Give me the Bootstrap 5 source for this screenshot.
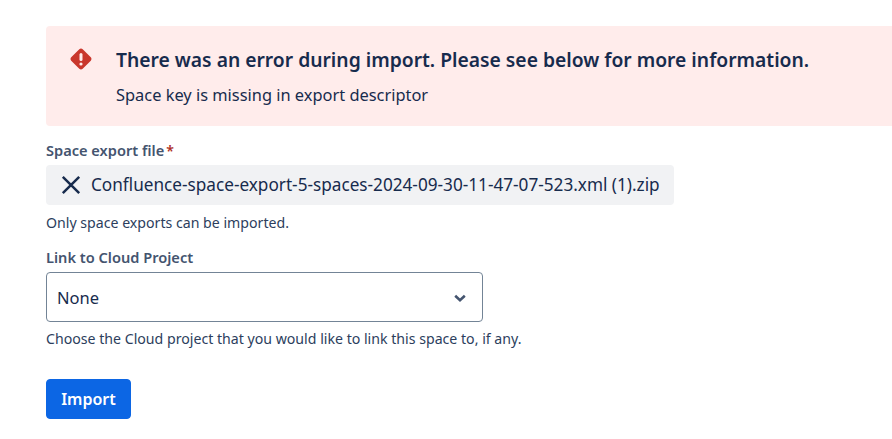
<!DOCTYPE html>
<html><head><meta charset="utf-8">
<link href="https://cdn.jsdelivr.net/npm/bootstrap@5.3.0/dist/css/bootstrap.min.css" rel="stylesheet">
<style>
html,body{height:439px;overflow:hidden}
body{background:#fff;font-family:"Noto Sans","Open Sans",sans-serif;color:#172b4d;font-size:14px;line-height:20px}
.page-wrap{padding:26px 0 0 46px}
.err-box{background:#ffeceb;height:100px;border-radius:4px 0 0 4px;padding:20px 24px 0 24px;gap:24px;color:#172b4d}
.err-ico{width:22px;height:22px;margin-top:2px;flex:none}
.err-title{font-size:19.3px;font-weight:600;line-height:28px;margin:0 0 9px;color:#172b4d;white-space:nowrap}
.err-msg{font-size:16.4px;line-height:24px;color:#172b4d}
.fld-label{font-size:14.6px;font-weight:600;line-height:20px;color:#44546f;margin:0}
.req{color:#ae2e24;margin-left:2px;font-size:14px}
.file-chip{background:#f1f2f4;height:40px;border-radius:4px;padding:0 14px;gap:9px;font-size:17.18px;color:#172b4d;font-weight:400;white-space:nowrap;width:628px}
.hint{font-size:14.15px;line-height:20px;color:#2c3e5d}
.sel-box{width:437px;height:50px;border:1px solid #738496;border-radius:4px;padding:2px 15px 0 10px;font-size:16.5px;color:#172b4d}
.imp-btn{--bs-btn-bg:#0c66e4;--bs-btn-border-color:#0c66e4;--bs-btn-hover-bg:#0c66e4;--bs-btn-color:#fff;width:85px;height:40px;font-size:16px;font-weight:600;border-radius:4px;padding:0}
.gap-a{margin-top:14px}.gap-b{margin-top:5px}.gap-f{margin-top:4px}.gap-c{margin-top:8px}.gap-g{margin-top:7px}.gap-d{margin-top:14px}.gap-e{margin-top:30px}
</style></head><body>
<div class="page-wrap">
<div class="err-box d-flex align-items-start">
<svg class="err-ico" viewBox="0 0 22 22"><path d="M11 0.500c.6 0 1.200.2 1.700.7l8.100 8.100c.9.900.9 2.500 0 3.400l-8.100 8.100c-.9.900-2.500.900-3.400 0l-8.100-8.100c-.9-.900-.9-2.500 0-3.400l8.100-8.100c.5-.5 1.100-.7 1.700-.7z" fill="#c9372c"/><rect x="9.500" y="5" width="3" height="8" rx="1.500" fill="#ffeceb"/><circle cx="11" cy="16" r="1.600" fill="#ffeceb"/></svg>
<div><p class="err-title">There was an error during import. Please see below for more information.</p><div class="err-msg">Space key is missing in export descriptor</div></div>
</div>
<div class="fld-label gap-a">Space export file<span class="req">*</span></div>
<div class="file-chip d-flex align-items-center gap-f"><svg width="22" height="22" viewBox="0 0 22 22"><path d="M2.800 2.800l16.400 16.400M19.200 2.800l-16.400 16.400" stroke="#172b4d" stroke-width="2.500" fill="none"/></svg><span>Confluence-space-export-5-spaces-2024-09-30-11-47-07-523.xml (1).zip</span></div>
<div class="hint gap-c">Only space exports can be imported.</div>
<div class="fld-label gap-d">Link to Cloud Project</div>
<div class="sel-box d-flex align-items-center justify-content-between gap-b"><span>None</span><svg width="14" height="14" viewBox="0 0 14 14"><path d="M2.200 4.800l4.800 4.400 4.800-4.400" stroke="#44546f" stroke-width="2.600" fill="none"/></svg></div>
<div class="hint gap-g">Choose the Cloud project that you would like to link this space to, if any.</div>
<button class="btn btn-primary imp-btn d-block gap-e" type="button">Import</button>
</div>
<script src="https://cdn.jsdelivr.net/npm/bootstrap@5.3.0/dist/js/bootstrap.bundle.min.js"></script>
</body></html>
